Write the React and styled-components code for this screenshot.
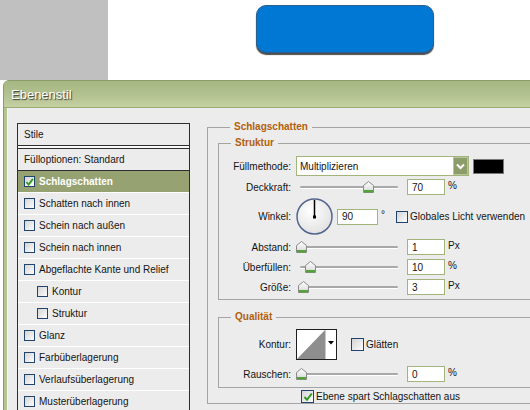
import React from "react";
import styled, { createGlobalStyle } from "styled-components";

const GlobalStyle = createGlobalStyle`
  html, body {
    margin: 0;
    padding: 0;
    overflow: hidden;
    background: #fff;
  }
  body {
    font-family: "Liberation Sans", Arial, sans-serif;
    font-size: 10px;
    color: #141414;
  }
`;

const Page = styled.div`
  width: 530px;
  height: 410px;
  overflow: hidden;
`;

const Top = styled.div`
  display: flex;
  height: 80px;
`;

const GrayBlock = styled.div`
  width: 108px;
  background: #c0c0c0;
`;

const Canvas = styled.div`
  flex: 1;
  background: #fff;
  padding: 5px 0 0 148px;
`;

const BlueButton = styled.div`
  width: 178px;
  height: 48px;
  box-sizing: border-box;
  border-radius: 10px;
  background: #0078d4;
  border: 1px solid #2b5f8e;
  box-shadow: 0 2px 1px rgba(0, 0, 0, 0.7);
`;

const Dialog = styled.div`
  margin-left: 3px;
  width: 600px;
  border: 1px solid #8b9c68;
  border-radius: 6px 6px 0 0;
  background: #b6c494;
`;

const TitleBar = styled.div`
  height: 26px;
  display: flex;
  align-items: center;
  padding-left: 7px;
  border-radius: 5px 5px 0 0;
  background: linear-gradient(#a6b783, #b3c290 55%, #c5d0a2);
  border-bottom: 1px solid #9aab76;
  color: #fff;
  font-size: 13px;
  text-shadow: 1px 1px 1px #3a3a2a;
`;

const Body = styled.div`
  margin-left: 3px;
  height: 320px;
  display: flex;
  gap: 17px;
  padding: 13px 0 0 9px;
  background: #ececec;
  border-left: 1px solid #f6f6f6;
`;

const ListBox = styled.div`
  width: 171px;
  flex: none;
  margin-top: 2px;
  align-self: flex-start;
  border: 1px solid #2e2e2e;
  border-bottom: none;
`;

const ListHead = styled.div`
  height: 21px;
  display: flex;
  align-items: center;
  padding-left: 6px;
  border-bottom: 1px solid #2e2e2e;
`;

const ListGap = styled.div`
  height: 2px;
  background: #fafafa;
  border-bottom: 1px solid #2e2e2e;
`;

const ListItem = styled.div`
  height: 21px;
  display: flex;
  align-items: center;
  gap: 4px;
  padding-left: ${(p) => (p.$indent ? 19 : 6)}px;
  border-bottom: 1px solid #fff;
  background: ${(p) => (p.$active ? "#97a273" : "transparent")};
  color: ${(p) => (p.$active ? "#fff" : "#141414")};
  font-weight: ${(p) => (p.$active ? "bold" : "normal")};
`;

const Box = styled.span`
  width: ${(p) => p.$size}px;
  height: ${(p) => p.$size}px;
  flex: none;
  box-sizing: border-box;
  border: 1px solid #1f456f;
  background: linear-gradient(135deg, #d4d4d4, #fdfdfd);
  display: flex;
  align-items: center;
  justify-content: center;
`;

const Right = styled.div`
  flex: 1;
  min-width: 0;
`;

const Group = styled.fieldset`
  margin: ${(p) => p.$mt || 0}px 0 0 0;
  padding: ${(p) => p.$pad};
  border: 1px solid #a4a4a4;
  min-width: 0;
`;

const GroupTitle = styled.legend`
  margin-left: 12px;
  padding: 0 4px;
  line-height: 12px;
  font-size: 10px;
  font-weight: bold;
  color: #b3600c;
`;

const Row = styled.div`
  display: flex;
  align-items: center;
  height: ${(p) => p.$h}px;
  margin-top: ${(p) => p.$mt || 0}px;
`;

const Label = styled.span`
  width: 72px;
  margin-right: 5px;
  text-align: right;
  flex: none;
`;

const Select = styled.div`
  width: 173px;
  height: 20px;
  box-sizing: border-box;
  border: 1px solid #a2b47c;
  background: #fff;
  display: flex;
  align-items: center;
  justify-content: space-between;
  padding-left: 3px;
`;

const SelectButton = styled.span`
  width: 15px;
  height: 18px;
  box-sizing: border-box;
  background: #8c9d6a;
  border: 1px solid #b9c59e;
  display: flex;
  align-items: center;
  justify-content: center;
`;

const Swatch = styled.span`
  width: 31px;
  height: 15px;
  margin-left: 4px;
  box-sizing: border-box;
  background: #000;
  border: 1px solid #7a7a7a;
`;

const SliderWrap = styled.div`
  position: relative;
  width: 98px;
  height: 16px;
  margin-left: 4px;
  flex: none;
`;

const Track = styled.div`
  position: absolute;
  left: 0;
  right: 0;
  top: 7px;
  height: 2px;
  border-radius: 1px;
  background: #a8a8a8;
  box-shadow: 0 1px 0 #fff;
`;

const Thumb = styled.svg`
  position: absolute;
  top: 2px;
`;

const Field = styled.div`
  width: ${(p) => p.$w || 38}px;
  height: 16px;
  margin-left: ${(p) => p.$ml || 9}px;
  box-sizing: border-box;
  border: 1px solid #a2b47c;
  background: #fff;
  padding-left: 4px;
  display: flex;
  align-items: center;
  flex: none;
`;

const Unit = styled.span`
  margin-left: 3px;
  align-self: ${(p) => (p.$top ? "flex-start" : "center")};
  margin-top: ${(p) => (p.$top ? 10 : -4)}px;
`;

const CheckLabel = styled.span`
  margin-left: ${(p) => p.$ml || 2}px;
`;

const Dial = styled.svg`
  flex: none;
`;

const Footer = styled.div`
  display: flex;
  align-items: center;
  padding-left: 83px;
  margin-top: 2px;
  height: 13px;
`;

const Check = () => (
  <svg width="10" height="10" viewBox="0 0 10 10">
    <path d="M1.5 5 L4 7.8 L8.8 1.5" fill="none" stroke="#2f9a1c" strokeWidth="2" />
  </svg>
);

const CheckBox = ({ size = 11, checked, ml }) => (
  <Box $size={size} style={ml ? { marginLeft: ml } : undefined}>
    {checked && <Check />}
  </Box>
);

const Slider = ({ value }) => (
  <SliderWrap>
    <Track />
    <Thumb width="11" height="12" viewBox="0 0 11 12" style={{ left: value * 97 + 1 - 5.5 }}>
      <defs>
        <linearGradient id="tg" x1="0" y1="0" x2="0" y2="1">
          <stop offset="0" stopColor="#ffffff" />
          <stop offset="1" stopColor="#d6d6d6" />
        </linearGradient>
      </defs>
      <path d="M0.5 4.5 L5.5 0.5 L10.5 4.5 L10.5 11.5 L0.5 11.5 Z" fill="url(#tg)" stroke="#8a8a8a" />
      <rect x="1" y="9" width="9" height="2.5" fill="#56a23a" />
    </Thumb>
  </SliderWrap>
);

const styles = [
  { name: "Schlagschatten", checked: true, active: true },
  { name: "Schatten nach innen" },
  { name: "Schein nach außen" },
  { name: "Schein nach innen" },
  { name: "Abgeflachte Kante und Relief" },
  { name: "Kontur", indent: true },
  { name: "Struktur", indent: true },
  { name: "Glanz" },
  { name: "Farbüberlagerung" },
  { name: "Verlaufsüberlagerung" },
  { name: "Musterüberlagerung" },
];

const sliders = [
  { label: "Abstand:", value: 0.003, field: "1", unit: "Px" },
  { label: "Überfüllen:", value: 0.1, field: "10", unit: "%" },
  { label: "Größe:", value: 0.03, field: "3", unit: "Px" },
];

export default function App() {
  return (
    <Page>
      <GlobalStyle />
      <Top>
        <GrayBlock />
        <Canvas>
          <BlueButton />
        </Canvas>
      </Top>
      <Dialog>
        <TitleBar>Ebenenstil</TitleBar>
        <Body>
          <ListBox>
            <ListHead>Stile</ListHead>
            <ListGap />
            <ListHead>Fülloptionen: Standard</ListHead>
            {styles.map((s) => (
              <ListItem key={s.name} $active={s.active} $indent={s.indent}>
                <CheckBox checked={s.checked} />
                {s.name}
              </ListItem>
            ))}
          </ListBox>

          <Right>
            <Group $pad="4px 0 0 10px">
              <GroupTitle>Schlagschatten</GroupTitle>

              <Group $pad="7px 0 4px 0">
                <GroupTitle>Struktur</GroupTitle>
                <Row $h={20}>
                  <Label>Füllmethode:</Label>
                  <Select>
                    Multiplizieren
                    <SelectButton>
                      <svg width="9" height="7" viewBox="0 0 9 7">
                        <path d="M1 1.5 L4.5 5 L8 1.5" fill="none" stroke="#fff" strokeWidth="2" />
                      </svg>
                    </SelectButton>
                  </Select>
                  <Swatch />
                </Row>
                <Row $h={16} $mt={3}>
                  <Label>Deckkraft:</Label>
                  <Slider value={0.7} />
                  <Field>70</Field>
                  <Unit>%</Unit>
                </Row>
                <Row $h={37} $mt={3}>
                  <Label>Winkel:</Label>
                  <Dial width="37" height="37" viewBox="0 0 37 37">
                    <defs>
                      <radialGradient id="dg" cx="0.4" cy="0.35" r="0.7">
                        <stop offset="0" stopColor="#ffffff" />
                        <stop offset="1" stopColor="#e0e0e0" />
                      </radialGradient>
                    </defs>
                    <circle cx="18.5" cy="18.5" r="17.5" fill="url(#dg)" stroke="#54668e" strokeWidth="1.5" />
                    <line x1="18.5" y1="19" x2="18.5" y2="2" stroke="#000" strokeWidth="1.5" />
                    <rect x="17" y="17.5" width="3" height="3" fill="#000" />
                  </Dial>
                  <Field $w={41} $ml={4}>90</Field>
                  <Unit>°</Unit>
                  <CheckBox size={12} ml={11} />
                  <CheckLabel>Globales Licht verwenden</CheckLabel>
                </Row>
                {sliders.map((s) => (
                  <Row key={s.label} $h={16} $mt={4}>
                    <Label>{s.label}</Label>
                    <Slider value={s.value} />
                    <Field>{s.field}</Field>
                    <Unit>{s.unit}</Unit>
                  </Row>
                ))}
              </Group>

              <Group $mt={11} $pad="6px 0 5px 0">
                <GroupTitle>Qualität</GroupTitle>
                <Row $h={31}>
                  <Label>Kontur:</Label>
                  <svg width="41" height="31" viewBox="0 0 41 31">
                    <rect x="0.5" y="0.5" width="40" height="30" fill="#fff" stroke="#1e1e1e" />
                    <polygon points="1,30 29,1 29,30" fill="#8e8e8e" />
                    <line x1="29.5" y1="1" x2="29.5" y2="30" stroke="#c8c8c8" />
                    <polygon points="32,12 38,12 35,15.5" fill="#000" />
                  </svg>
                  <CheckBox size={13} ml={14} />
                  <CheckLabel>Glätten</CheckLabel>
                </Row>
                <Row $h={16} $mt={6}>
                  <Label>Rauschen:</Label>
                  <Slider value={0} />
                  <Field>0</Field>
                  <Unit>%</Unit>
                </Row>
              </Group>

              <Footer>
                <CheckBox size={13} checked />
                <CheckLabel>Ebene spart Schlagschatten aus</CheckLabel>
              </Footer>
            </Group>
          </Right>
        </Body>
      </Dialog>
    </Page>
  );
}
